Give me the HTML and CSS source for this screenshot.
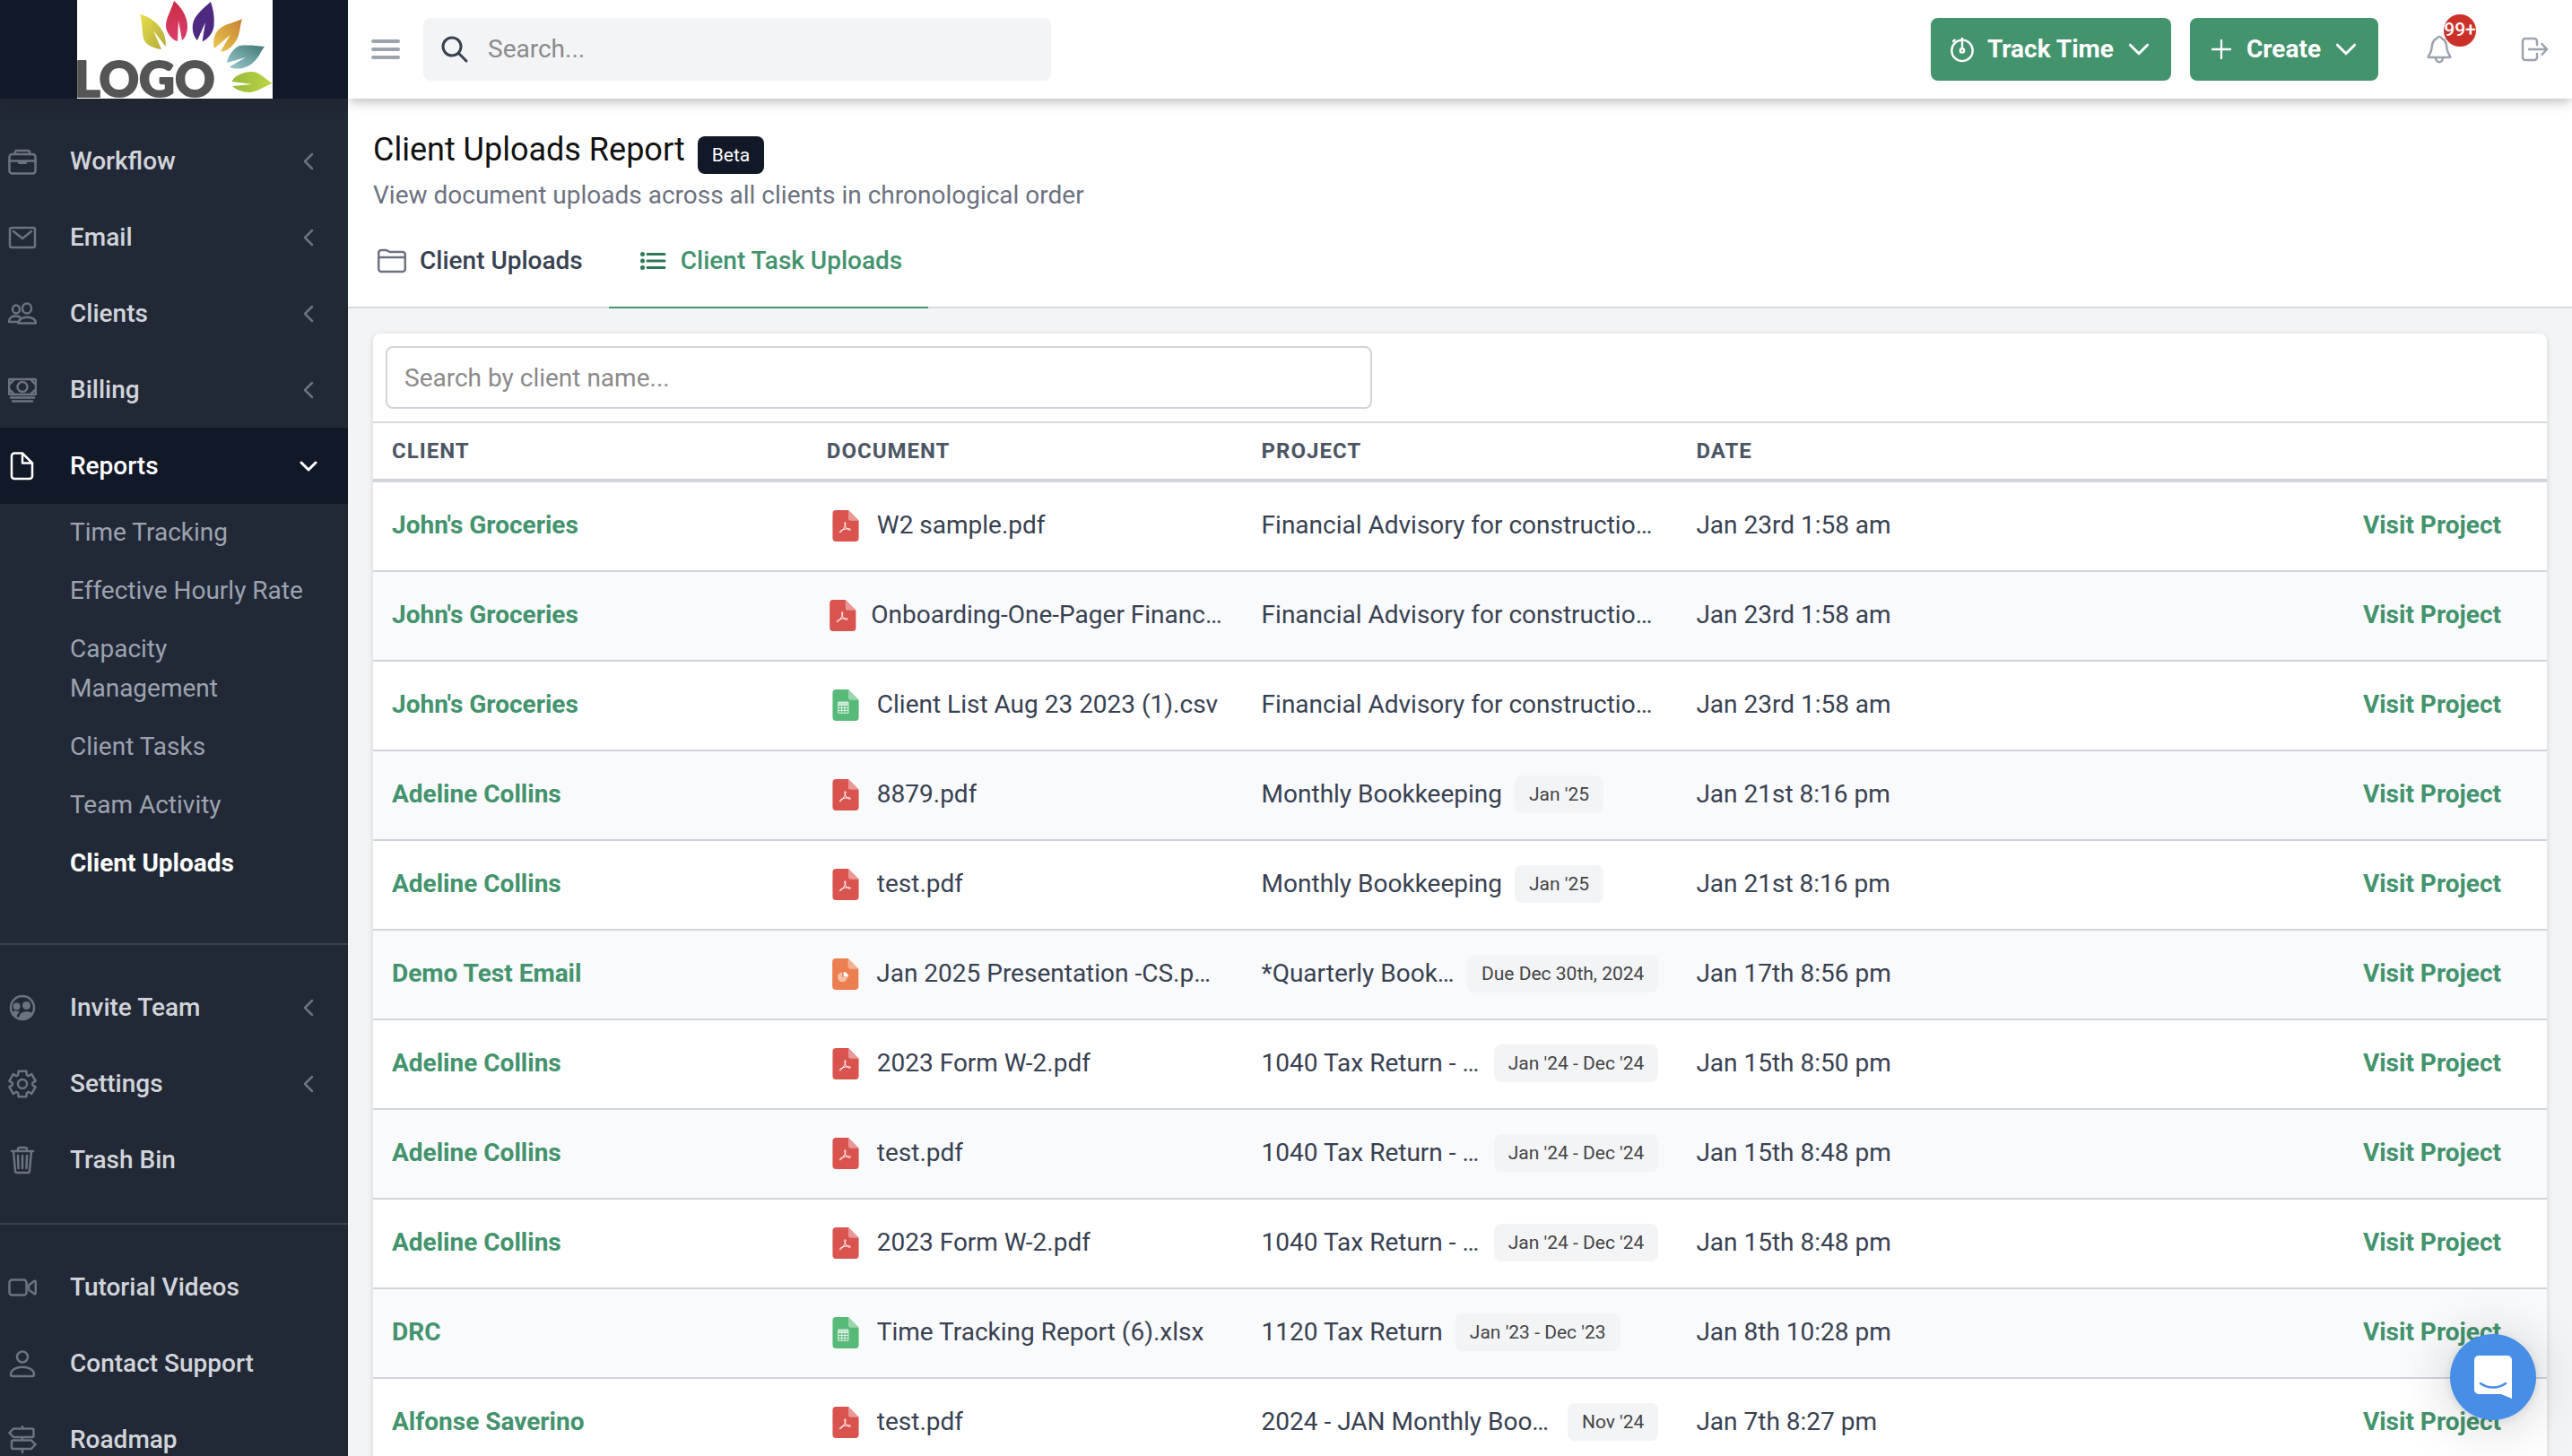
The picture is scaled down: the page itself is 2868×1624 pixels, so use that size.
FILE: index.html
```html
<!DOCTYPE html>
<html lang="en">
<head>
  <meta charset="UTF-8">
  <meta name="viewport" content="width=device-width, initial-scale=1.0">
  <title>Client Uploads Report</title>
  <link rel="stylesheet" href="styles.css">
</head>
<body>
  <!-- icon sprite -->
  <svg class="sprite" aria-hidden="true">
    <symbol id="i-briefcase" viewBox="0 0 32 32"><rect x="1.500" y="8" width="29" height="21.500" rx="3"/><path d="M8 8V6a2 2 0 0 1 2-2h12a2 2 0 0 1 2 2v2M1 15.500h30"/><path d="M10 16h12l-2 3h-8z" fill="currentColor" stroke="none"/></symbol>
    <symbol id="i-mail" viewBox="0 0 32 32"><rect x="2" y="5" width="28" height="22" rx="2"/><path d="M6 9l10 8 10-8"/></symbol>
    <symbol id="i-people" viewBox="0 0 32 32"><ellipse cx="9" cy="11" rx="4" ry="4.500"/><ellipse cx="21" cy="10" rx="5" ry="5.500"/><path d="M11.500 26.500c0-9 19.500-9 19.500 0zM10 25H1c0-6 6-8 12-5.500"/></symbol>
    <symbol id="i-cash" viewBox="0 0 32 32"><rect x="1" y="4" width="30" height="17" rx="1"/><circle cx="16" cy="12.500" r="5.500"/><path d="M2 9l5-5M2 16l5 5M30 9l-5-5M30 16l-5 5M3 24.500h26M5 28.500h22"/></symbol>
    <symbol id="i-file" viewBox="0 0 32 32"><path d="M7 1.500h9l11 11V27a3 3 0 0 1-3 3H7a3 3 0 0 1-3-3V4.500a3 3 0 0 1 3-3zM16 1.500v11h11"/></symbol>
    <symbol id="i-team" viewBox="0 0 32 32"><circle cx="16" cy="16" r="13"/><g fill="currentColor" stroke="none"><circle cx="9.500" cy="14.500" r="4"/><circle cx="20.500" cy="13.500" r="4.500"/><path d="M12 28c0-10 14-9 16-5-3 6-10 8-16 5zM4 21c2-2 6-2 9-.500-2 1.500-3 3.500-3.500 6C7 25.500 5 23.500 4 21z"/></g></symbol>
    <symbol id="i-gear" viewBox="0 0 32 32"><path d="M11.600 1.700h8.800l.4 4.300 1.900 1.100 3.500-2.100 4.400 7.600-3.400 2.300v2.200l3.400 2.300-4.400 7.600-3.500-2.100-1.900 1.100-.4 4.300h-8.800l-.4-4.300-1.900-1.100L5.800 27l-4.400-7.600 3.400-2.300v-2.200l-3.400-2.300L5.800 5l3.500 2.100L11.200 6z"/><circle cx="16" cy="16" r="5"/></symbol>
    <symbol id="i-trash" viewBox="0 0 32 32"><path d="M4 6h24M6 6l2 22a2 2 0 0 0 2 2h12a2 2 0 0 0 2-2l2-22M11 6V4a2 2 0 0 1 2-2h6a2 2 0 0 1 2 2v2M11 11l.500 14M16 11v14M21 11l-.500 14"/></symbol>
    <symbol id="i-video" viewBox="0 0 32 32"><rect x="1.500" y="7.500" width="19" height="17" rx="3"/><path d="M23 13.500l6-4.500c1-.7 1.800 0 1.800 1v12c0 1-.8 1.700-1.800 1l-6-4.500z"/></symbol>
    <symbol id="i-person" viewBox="0 0 32 32"><circle cx="16" cy="8.500" r="6"/><path d="M3 28c0-11 26-11 26 0 0 1.500-.500 2-2 2H5c-1.500 0-2-.500-2-2z"/></symbol>
    <symbol id="i-signs" viewBox="0 0 32 32"><path d="M16 1v2.500M16 13v3.500M16 26v4M6 3.500h21a1.500 1.500 0 0 1 1.500 1.500v6.500A1.500 1.500 0 0 1 27 13H6L1.500 8.200zM26 16.500H5.500A1.500 1.500 0 0 0 4 18v6.500A1.500 1.500 0 0 0 5.500 26H26l4.500-4.800z"/></symbol>
    <symbol id="i-left" viewBox="0 0 20 20"><path d="M14 2l-8 8 8 8"/></symbol>
    <symbol id="i-down" viewBox="0 0 20 20"><path d="M2 6l8 8 8-8"/></symbol>
    <symbol id="i-menu" viewBox="0 0 32 32"><path d="M2 7h28M2 16h28M2 25h28"/></symbol>
    <symbol id="i-search" viewBox="0 0 32 32"><circle cx="13" cy="13" r="10"/><path d="M20.500 20.500L29 29"/></symbol>
    <symbol id="i-timer" viewBox="0 0 32 32"><circle cx="16" cy="17.500" r="12.500"/><path d="M16 3v12M7 5L5.500 6.500"/><circle cx="16" cy="17.500" r="2.300"/></symbol>
    <symbol id="i-plus" viewBox="0 0 24 24"><path d="M12 1v22M1 12h22"/></symbol>
    <symbol id="i-bell" viewBox="0 0 32 32"><path d="M16 2c2 0 2.500 1 3 2 5 2 5 7 5.500 11 .500 4 1.500 6 3.500 8.500.500 1 .500 1.500-.500 1.500h-23c-1 0-1-.500-.500-1.500C6 21 7 19 7.500 15 8 11 8 6 13 4c.500-1 1-2 3-2zM12 25c0 7 8 7 8 0"/></symbol>
    <symbol id="i-exit" viewBox="0 0 32 32"><path d="M19 11V7a3 3 0 0 0-3-3H6a3 3 0 0 0-3 3v18a3 3 0 0 0 3 3h10a3 3 0 0 0 3-3v-4M10 16h20M24.500 10l5.500 6-5.500 6"/></symbol>
    <symbol id="i-folder" viewBox="0 0 32 32"><path d="M1.200 24V7a3 3 0 0 1 3-3h5c2 0 3 2 5 2h13.600a3 3 0 0 1 3 3v16a3 3 0 0 1-3 3H4.200a3 3 0 0 1-3-3zM1.200 12h29.600"/></symbol>
    <symbol id="i-list" viewBox="0 0 32 32"><path d="M10 8.500h19M10 16h19M10 23.500h19"/><g fill="currentColor" stroke="none"><circle cx="4.500" cy="8.500" r="2.500"/><circle cx="4.500" cy="16" r="2.500"/><circle cx="4.500" cy="23.500" r="2.500"/></g></symbol>
    <symbol id="f-pdf" viewBox="0 0 30 36"><path fill="#d9534f" d="M4 0h14l12 12v20a4 4 0 0 1-4 4H4a4 4 0 0 1-4-4V4a4 4 0 0 1 4-4z"/><path fill="#e99895" d="M18 0l12 12h-9a3 3 0 0 1-3-3z"/><path fill="none" stroke="#fff" d="M14 14c2.500 0 0 7-5 11.500-1.500.500-1-2 2.500-3 3-1 8-2 9-.500.500 1.500-3 1-4.500-1-1.500-2-3-6.500-2-7z"/></symbol>
    <symbol id="f-sheet" viewBox="0 0 30 36"><path fill="#58ba79" d="M4 0h14l12 12v20a4 4 0 0 1-4 4H4a4 4 0 0 1-4-4V4a4 4 0 0 1 4-4z"/><path fill="#9bd6ae" d="M18 0l12 12h-9a3 3 0 0 1-3-3z"/><path fill="#bfe5cb" d="M6.500 14.500h11.500v3H6.500z"/><path fill="none" stroke="#e4f5ea" d="M6.500 14.500H18V27H6.500zM6.500 18H18M6.500 21H18M6.500 24H18M10.500 18v9M14 18v9"/></symbol>
    <symbol id="f-slides" viewBox="0 0 30 36"><path fill="#ec7f4f" d="M4 0h14l12 12v20a4 4 0 0 1-4 4H4a4 4 0 0 1-4-4V4a4 4 0 0 1 4-4z"/><path fill="#f4b295" d="M18 0l12 12h-9a3 3 0 0 1-3-3z"/><path fill="#f6bfa7" d="M11.500 16v5.500H17A5.500 5.500 0 1 1 11.500 16z"/><path fill="#fff" d="M13 15.500a5.500 5.500 0 0 1 5.500 5.500H13z"/></symbol>
  </svg>

  <div class="app">
    <aside class="sidebar">
      <a class="brand" href="#" aria-label="Home">
        <svg class="logo" viewBox="0 0 218 110">
          <defs>
            <linearGradient id="g1" x2="1" y2="1"><stop stop-color="#e6e04c"/><stop offset="1" stop-color="#b3a93c"/></linearGradient>
            <linearGradient id="g2" x2="0" y2="1"><stop stop-color="#cb2b45"/><stop offset="1" stop-color="#da3f6c"/></linearGradient>
            <linearGradient id="g3" x1="1" x2="0" y2="1"><stop stop-color="#c67f33"/><stop offset="1" stop-color="#ecca4f"/></linearGradient>
            <linearGradient id="g4" x1="1" x2="0" y2="1"><stop stop-color="#3f7873"/><stop offset="1" stop-color="#9fcad2"/></linearGradient>
            <linearGradient id="g5" x2="1"><stop stop-color="#97b93c"/><stop offset="1" stop-color="#bdd544"/></linearGradient>
          </defs>
          <rect width="218" height="110" fill="#fff"/>
          <path fill="url(#g1)" d="M70 16c14 3 31 17 28.700 36L85 34l9 21c-9-1-18-5-20-12-2-9-1-18-4-27z"/>
          <path fill="url(#g2)" d="M108 1c8 7 15 17 15 28 0 7-2 13-6 16l-4-22-1 23c-6-1-13-10-13-17 0-9 6-18 9-28z"/>
          <path fill="#4d2a80" d="M149 2c4 12 4 20 3.500 27-1 8-7 15-13 17.500L143 25l-9 20c-4-4-6-11-5-18 1-9 12-18 20-25z"/>
          <path fill="url(#g3)" d="M184 21c-3 10-2 16-6 23-4 7-11 14-18 13.500l10.500-18.500L153 54c-2-6-.500-14 3-19 6-8 18-9 28-14z"/>
          <path fill="url(#g4)" d="M209 52c-5 6-6 12-12 17-6 6-13 8-20 7.500-3 0-6-1-7-2L188 64l-21 6c1-7 7-16 14-19 9-1 19 0 28 1z"/>
          <path fill="url(#g5)" d="M217.500 93c-8 3-16 9-25 10-8 0-16-3-19-7l22-2-23-3c3-7 13-11 22-11s15 8 23 13z"/>
          <text class="logo-text" x="-3" y="108">LOGO</text>
        </svg>
      </a>
      <nav class="nav">
        <a class="nav-item" href="#"><svg class="icon"><use href="#i-briefcase"/></svg><span>Workflow</span><svg class="chev"><use href="#i-left"/></svg></a>
        <a class="nav-item" href="#"><svg class="icon"><use href="#i-mail"/></svg><span>Email</span><svg class="chev"><use href="#i-left"/></svg></a>
        <a class="nav-item" href="#"><svg class="icon"><use href="#i-people"/></svg><span>Clients</span><svg class="chev"><use href="#i-left"/></svg></a>
        <a class="nav-item" href="#"><svg class="icon"><use href="#i-cash"/></svg><span>Billing</span><svg class="chev"><use href="#i-left"/></svg></a>
        <a class="nav-item active" href="#"><svg class="icon"><use href="#i-file"/></svg><span>Reports</span><svg class="chev"><use href="#i-down"/></svg></a>
        <div class="subnav">
          <a href="#">Time Tracking</a>
          <a href="#">Effective Hourly Rate</a>
          <a href="#">Capacity Management</a>
          <a href="#">Client Tasks</a>
          <a href="#">Team Activity</a>
          <a class="current" href="#">Client Uploads</a>
        </div>
      </nav>
      <nav class="nav">
        <a class="nav-item" href="#"><svg class="icon"><use href="#i-team"/></svg><span>Invite Team</span><svg class="chev"><use href="#i-left"/></svg></a>
        <a class="nav-item" href="#"><svg class="icon"><use href="#i-gear"/></svg><span>Settings</span><svg class="chev"><use href="#i-left"/></svg></a>
        <a class="nav-item" href="#"><svg class="icon"><use href="#i-trash"/></svg><span>Trash Bin</span></a>
      </nav>
      <nav class="nav">
        <a class="nav-item" href="#"><svg class="icon"><use href="#i-video"/></svg><span>Tutorial Videos</span></a>
        <a class="nav-item" href="#"><svg class="icon"><use href="#i-person"/></svg><span>Contact Support</span></a>
        <a class="nav-item" href="#"><svg class="icon"><use href="#i-signs"/></svg><span>Roadmap</span></a>
      </nav>
    </aside>

    <div class="content">
      <header class="topbar">
        <button class="icon-btn menu-btn" type="button" aria-label="Toggle menu"><svg class="icon"><use href="#i-menu"/></svg></button>
        <label class="search">
          <svg class="icon"><use href="#i-search"/></svg>
          <input type="search" placeholder="Search..." aria-label="Search">
        </label>
        <div class="actions">
          <button class="btn" type="button"><svg class="icon"><use href="#i-timer"/></svg>Track Time<svg class="caret"><use href="#i-down"/></svg></button>
          <button class="btn" type="button"><svg class="icon plus"><use href="#i-plus"/></svg>Create<svg class="caret"><use href="#i-down"/></svg></button>
          <button class="icon-btn bell" type="button" aria-label="Notifications"><svg class="icon"><use href="#i-bell"/></svg><span class="count">99+</span></button>
          <button class="icon-btn" type="button" aria-label="Log out"><svg class="icon"><use href="#i-exit"/></svg></button>
        </div>
      </header>

      <section class="page-head">
        <div class="title-row">
          <h1>Client Uploads Report</h1>
          <span class="beta">Beta</span>
        </div>
        <p class="subtitle">View document uploads across all clients in chronological order</p>
        <div class="tabs">
          <a class="tab" href="#"><svg class="icon"><use href="#i-folder"/></svg>Client Uploads</a>
          <a class="tab selected" href="#"><svg class="icon"><use href="#i-list"/></svg>Client Task Uploads</a>
        </div>
      </section>

      <main class="main">
        <div class="card">
          <div class="filter">
            <input type="text" placeholder="Search by client name..." aria-label="Search by client name">
          </div>
          <table class="uploads">
            <thead>
              <tr><th>Client</th><th>Document</th><th>Project</th><th>Date</th><th></th></tr>
            </thead>
            <tbody>
              <tr>
                <td><a href="#">John's Groceries</a></td>
                <td><div class="cell"><svg class="file"><use href="#f-pdf"/></svg><span>W2 sample.pdf</span></div></td>
                <td><div class="cell"><span>Financial Advisory for construction company</span></div></td>
                <td>Jan 23rd 1:58 am</td>
                <td><a href="#">Visit Project</a></td>
              </tr>
              <tr>
                <td><a href="#">John's Groceries</a></td>
                <td><div class="cell"><svg class="file"><use href="#f-pdf"/></svg><span>Onboarding-One-Pager Financials.pdf</span></div></td>
                <td><div class="cell"><span>Financial Advisory for construction company</span></div></td>
                <td>Jan 23rd 1:58 am</td>
                <td><a href="#">Visit Project</a></td>
              </tr>
              <tr>
                <td><a href="#">John's Groceries</a></td>
                <td><div class="cell"><svg class="file"><use href="#f-sheet"/></svg><span>Client List Aug 23 2023 (1).csv</span></div></td>
                <td><div class="cell"><span>Financial Advisory for construction company</span></div></td>
                <td>Jan 23rd 1:58 am</td>
                <td><a href="#">Visit Project</a></td>
              </tr>
              <tr>
                <td><a href="#">Adeline Collins</a></td>
                <td><div class="cell"><svg class="file"><use href="#f-pdf"/></svg><span>8879.pdf</span></div></td>
                <td><div class="cell"><span>Monthly Bookkeeping</span><em class="tag">Jan '25</em></div></td>
                <td>Jan 21st 8:16 pm</td>
                <td><a href="#">Visit Project</a></td>
              </tr>
              <tr>
                <td><a href="#">Adeline Collins</a></td>
                <td><div class="cell"><svg class="file"><use href="#f-pdf"/></svg><span>test.pdf</span></div></td>
                <td><div class="cell"><span>Monthly Bookkeeping</span><em class="tag">Jan '25</em></div></td>
                <td>Jan 21st 8:16 pm</td>
                <td><a href="#">Visit Project</a></td>
              </tr>
              <tr>
                <td><a href="#">Demo Test Email</a></td>
                <td><div class="cell"><svg class="file"><use href="#f-slides"/></svg><span>Jan 2025 Presentation -CS.pptx</span></div></td>
                <td><div class="cell"><span>*Quarterly Bookkeeping</span><em class="tag">Due Dec 30th, 2024</em></div></td>
                <td>Jan 17th 8:56 pm</td>
                <td><a href="#">Visit Project</a></td>
              </tr>
              <tr>
                <td><a href="#">Adeline Collins</a></td>
                <td><div class="cell"><svg class="file"><use href="#f-pdf"/></svg><span>2023 Form W-2.pdf</span></div></td>
                <td><div class="cell"><span>1040 Tax Return - Individual</span><em class="tag">Jan '24 - Dec '24</em></div></td>
                <td>Jan 15th 8:50 pm</td>
                <td><a href="#">Visit Project</a></td>
              </tr>
              <tr>
                <td><a href="#">Adeline Collins</a></td>
                <td><div class="cell"><svg class="file"><use href="#f-pdf"/></svg><span>test.pdf</span></div></td>
                <td><div class="cell"><span>1040 Tax Return - Individual</span><em class="tag">Jan '24 - Dec '24</em></div></td>
                <td>Jan 15th 8:48 pm</td>
                <td><a href="#">Visit Project</a></td>
              </tr>
              <tr>
                <td><a href="#">Adeline Collins</a></td>
                <td><div class="cell"><svg class="file"><use href="#f-pdf"/></svg><span>2023 Form W-2.pdf</span></div></td>
                <td><div class="cell"><span>1040 Tax Return - Individual</span><em class="tag">Jan '24 - Dec '24</em></div></td>
                <td>Jan 15th 8:48 pm</td>
                <td><a href="#">Visit Project</a></td>
              </tr>
              <tr>
                <td><a href="#">DRC</a></td>
                <td><div class="cell"><svg class="file"><use href="#f-sheet"/></svg><span>Time Tracking Report (6).xlsx</span></div></td>
                <td><div class="cell"><span>1120 Tax Return</span><em class="tag">Jan '23 - Dec '23</em></div></td>
                <td>Jan 8th 10:28 pm</td>
                <td><a href="#">Visit Project</a></td>
              </tr>
              <tr>
                <td><a href="#">Alfonse Saverino</a></td>
                <td><div class="cell"><svg class="file"><use href="#f-pdf"/></svg><span>test.pdf</span></div></td>
                <td><div class="cell"><span>2024 - JAN Monthly Bookkeeping</span><em class="tag">Nov '24</em></div></td>
                <td>Jan 7th 8:27 pm</td>
                <td><a href="#">Visit Project</a></td>
              </tr>
            </tbody>
          </table>
        </div>
      </main>
    </div>
  </div>

  <button class="chat" type="button" aria-label="Open chat">
    <svg viewBox="0 0 42 48"><path fill="#fff" d="M5 0h32a5 5 0 0 1 5 5v43l-12-5H5a5 5 0 0 1-5-5V5a5 5 0 0 1 5-5z"/><path fill="none" stroke="#478fe6" stroke-width="2.500" stroke-linecap="round" d="M7 31c8 6 20 6 28 0"/></svg>
  </button>
</body>
</html>
```

FILE: styles.css
```css
* {
  margin: 0;
  padding: 0;
  box-sizing: border-box;
}
body {
  font-family: Roboto, "Liberation Sans", sans-serif;
  font-size: 28px;
  line-height: 42px;
  color: #374151;
  background: #f3f4f6;
  overflow: hidden;
}
a {
  color: inherit;
  text-decoration: none;
}
button, input {
  font: inherit;
  color: inherit;
  border: 0;
  background: none;
}
input {
  min-width: 0;
  outline: 0;
}
input::placeholder {
  color: #8a8a8a;
  opacity: 1;
}
button {
  cursor: pointer;
}
.sprite {
  display: none;
}
.icon, .chev, .caret {
  flex: none;
  width: 32px;
  height: 32px;
  fill: none;
  stroke: currentColor;
  stroke-width: 2.5;
  stroke-linecap: round;
  stroke-linejoin: round;
}
.app {
  display: flex;
  height: 100vh;
}

/* sidebar */
.sidebar {
  flex: none;
  width: 388px;
  overflow: hidden;
  background: #222936;
  color: #d1d5db;
}
.brand {
  position: relative;
  display: flex;
  justify-content: center;
  height: 110px;
  padding-left: 2px;
  background: #111827;
  box-shadow: 0 4px 12px rgba(0, 0, 0, 0.15);
}
.logo {
  width: 218px;
  height: 110px;
}
.logo-text {
  font-family: Lato, sans-serif;
  font-weight: 900;
  font-size: 55px;
  fill: #555;
  stroke: #555;
  stroke-width: 2px;
  stroke-linejoin: round;
}
.nav {
  padding: 27px 0 28px;
}
.nav + .nav {
  border-top: 2px solid #3a4250;
}
.nav-item {
  display: flex;
  align-items: center;
  height: 85px;
  padding: 0 34px 0 9px;
  font-weight: 500;
}
.nav-item span {
  flex: 1;
  padding-left: 37px;
}
.nav-item .icon, .nav-item .chev {
  color: #6b7280;
}
.nav-item .chev {
  width: 20px;
  height: 20px;
}
.nav-item.active {
  background: #111827;
}
.nav-item.active, .nav-item.active .icon, .nav-item.active .chev {
  color: #fff;
}
.nav-item.active .chev {
  stroke-width: 3;
}
.subnav {
  padding: 0 42px 28px 78px;
  line-height: 44px;
  color: #9ca3af;
}
.subnav a {
  display: block;
  padding: 10px 0 11px;
}
.subnav .current {
  color: #fff;
  font-weight: 700;
}

/* top bar */
.content {
  flex: 1;
  min-width: 0;
  overflow: hidden;
}
.topbar {
  position: relative;
  display: flex;
  align-items: center;
  height: 110px;
  padding: 0 26px;
  background: #fff;
  box-shadow: 0 6px 12px -2px rgba(0, 0, 0, 0.25);
}
.icon-btn {
  display: flex;
  color: #9ca3af;
}
.menu-btn .icon {
  stroke-width: 4;
}
.search {
  display: flex;
  align-items: center;
  width: 700px;
  height: 70px;
  margin-left: 26px;
  padding: 0 19px;
  border-radius: 8px;
  background: #f3f4f6;
}
.search .icon {
  stroke-width: 3;
}
.search input {
  flex: 1;
  margin-left: 21px;
}
.actions {
  display: flex;
  align-items: center;
  margin-left: auto;
}
.btn {
  display: flex;
  align-items: center;
  height: 70px;
  margin-right: 21px;
  padding: 0 24px 0 20px;
  border-radius: 8px;
  background: #43936c;
  color: #fff;
  font-weight: 700;
}
.btn .icon {
  width: 30px;
  height: 30px;
  margin-right: 13px;
}
.btn .plus {
  width: 22px;
  height: 22px;
  margin: 0 17px 0 4px;
}
.btn .caret {
  width: 24px;
  height: 24px;
  margin-left: 16px;
}
.bell {
  position: relative;
  margin: 0 74px 0 31px;
}
.count {
  position: absolute;
  left: 21px;
  top: -23px;
  width: 36px;
  height: 36px;
  border-radius: 50%;
  background: #cb3129;
  color: #fff;
  font-size: 21px;
  font-weight: 500;
  line-height: 34px;
  text-align: center;
}

/* page heading */
.page-head {
  padding: 27px 28px 0;
  background: #fff;
  border-bottom: 2px solid #dadbdd;
}
.title-row {
  display: flex;
  align-items: flex-end;
}
h1 {
  font-size: 36px;
  font-weight: 400;
  line-height: 60px;
  color: #111;
}
.beta {
  margin: 0 0 3px 14px;
  padding: 0 16px;
  border-radius: 8px;
  background: #111827;
  color: #fff;
  font-size: 21px;
}
.subtitle {
  color: #6b7280;
}
.tabs {
  display: flex;
  margin-left: -28px;
}
.tab {
  display: flex;
  align-items: center;
  padding: 31px 29px 30px;
  margin-bottom: -2px;
  border-bottom: 2px solid transparent;
  font-weight: 500;
}
.tab .icon {
  margin: 0 15px 0 4px;
  color: #6b7280;
}
.tab.selected {
  color: #43936c;
  border-color: #43936c;
}
.tab.selected .icon {
  color: #2f7a55;
  stroke-width: 3;
}

/* uploads table */
.main {
  padding: 28px;
}
.card {
  overflow: hidden;
  border-radius: 8px;
  background: #fff;
  box-shadow: 0 2px 6px rgba(0, 0, 0, 0.15);
}
.filter {
  padding: 14px;
  border-bottom: 2px solid #dadbdd;
}
.filter input {
  display: block;
  width: 1100px;
  height: 70px;
  padding: 0 19px;
  border: 2px solid #d1d5db;
  border-radius: 8px;
}
.uploads {
  width: 100%;
  table-layout: fixed;
  border-collapse: separate;
  border-spacing: 0;
}
.uploads th {
  padding: 10px 21px;
  border-bottom: 4px solid #d1d5db;
  color: #4b5563;
  font-size: 24px;
  font-weight: 700;
  letter-spacing: 1px;
  text-align: left;
  text-transform: uppercase;
}
.uploads td {
  padding: 27px 21px 29px;
  border-bottom: 2px solid #d1d5db;
}
.uploads tr:nth-child(even) td {
  background: #f9fafb;
}
.uploads td:last-child {
  padding-right: 51px;
  text-align: right;
}
.uploads a {
  color: #43936c;
  font-weight: 700;
}
.cell {
  display: flex;
  align-items: center;
}
.cell span {
  overflow: hidden;
  white-space: nowrap;
  text-overflow: ellipsis;
}
.file {
  width: 42px;
  height: 35px;
  margin-right: 14px;
}
.tag {
  flex: none;
  margin-left: 14px;
  padding: 0 16px;
  border-radius: 8px;
  background: #f3f4f6;
  color: #444;
  font-size: 21px;
  font-style: normal;
}

/* chat launcher */
.chat {
  position: fixed;
  right: 40px;
  bottom: 40px;
  display: flex;
  align-items: center;
  justify-content: center;
  width: 96px;
  height: 96px;
  border-radius: 50%;
  background: #478fe6;
  box-shadow: 0 2px 12px rgba(0, 0, 0, 0.1), 0 4px 64px rgba(0, 0, 0, 0.2);
}
.chat svg {
  width: 42px;
  height: 48px;
}
```
